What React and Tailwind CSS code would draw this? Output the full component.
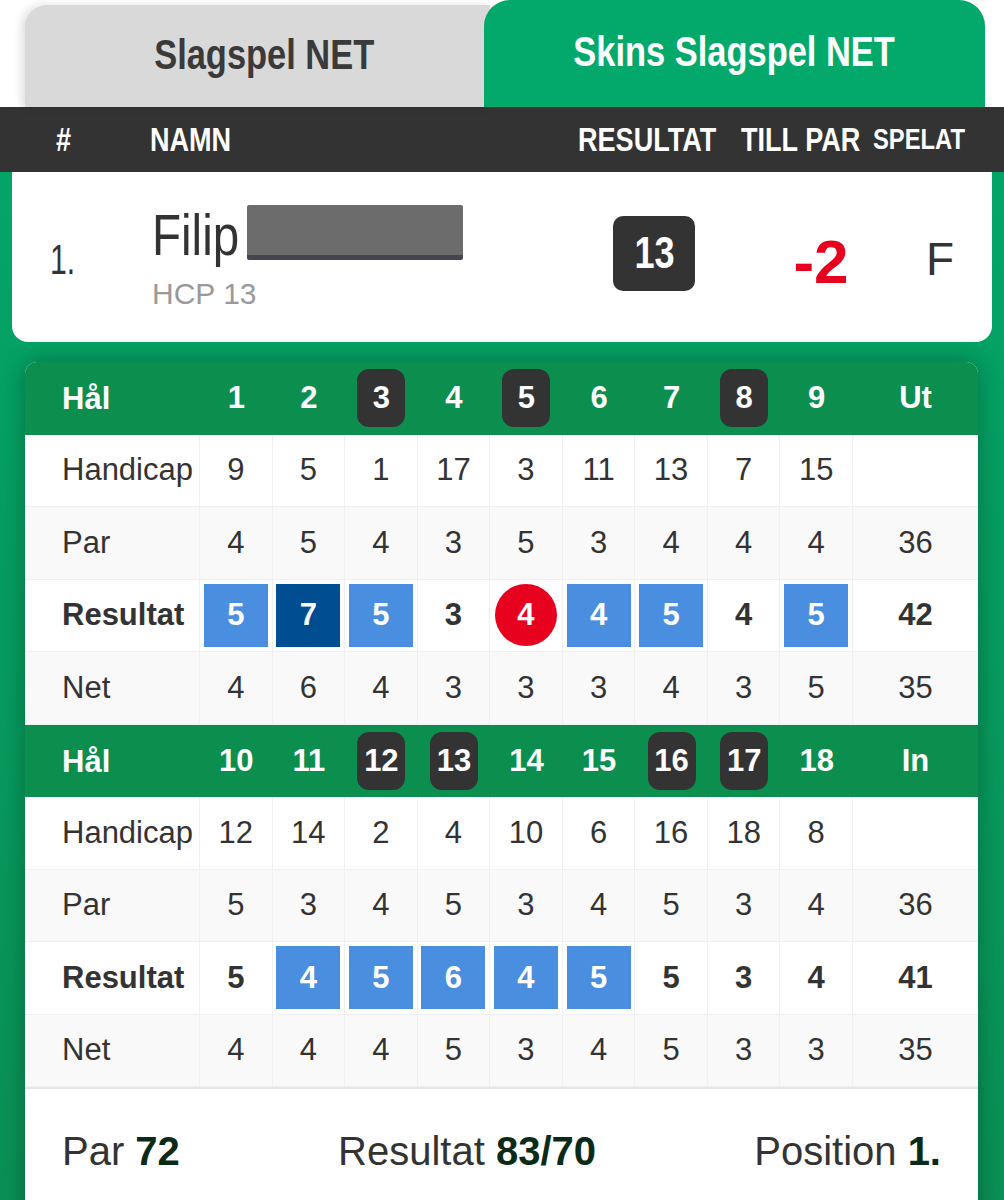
const narrow = "inline-block whitespace-nowrap scale-x-[0.82]";

const FRONT = {
  label: "Ut",
  holes: [1, 2, 3, 4, 5, 6, 7, 8, 9],
  marked: [3, 5, 8],
  hcp: [9, 5, 1, 17, 3, 11, 13, 7, 15],
  par: [4, 5, 4, 3, 5, 3, 4, 4, 4],
  res: [5, 7, 5, 3, 4, 4, 5, 4, 5],
  net: [4, 6, 4, 3, 3, 3, 4, 3, 5],
  totals: { par: 36, res: 42, net: 35 },
};

const BACK = {
  label: "In",
  holes: [10, 11, 12, 13, 14, 15, 16, 17, 18],
  marked: [12, 13, 16, 17],
  hcp: [12, 14, 2, 4, 10, 6, 16, 18, 8],
  par: [5, 3, 4, 5, 3, 4, 5, 3, 4],
  res: [5, 4, 5, 6, 4, 5, 5, 3, 4],
  net: [4, 4, 4, 5, 3, 4, 5, 3, 3],
  totals: { par: 36, res: 41, net: 35 },
};

const grid = "grid grid-cols-[175px_repeat(9,minmax(0,1fr))_125px]";

function ScoreCell({ score, par }) {
  const diff = score - par;
  if (diff < 0) {
    return (
      <div className="w-[62px] h-[62px] rounded-full bg-[#e8001f] text-white font-bold flex items-center justify-center">
        {score}
      </div>
    );
  }
  if (diff === 0) {
    return <span className="font-bold">{score}</span>;
  }
  return (
    <div
      className={
        diff === 1
          ? "w-[64px] h-[63px] bg-[#4a8ee0] text-white font-bold flex items-center justify-center"
          : "w-[64px] h-[63px] bg-[#004d91] text-white font-bold flex items-center justify-center"
      }
    >
      {score}
    </div>
  );
}

function DataRow({ label, values, total, bg, bold, par }) {
  return (
    <div className={`${grid} h-[72.5px] ${bg} border-b border-[#f0f0f0]`}>
      <div
        className={`pl-[37px] flex items-center border-r border-[#f0f0f0] ${
          bold ? "font-bold" : ""
        }`}
      >
        {label}
      </div>
      {values.map((v, i) => (
        <div
          key={i}
          className="flex items-center justify-center border-r border-[#f0f0f0]"
        >
          {par ? <ScoreCell score={v} par={par[i]} /> : v}
        </div>
      ))}
      <div className={`flex items-center justify-center ${bold ? "font-bold" : ""}`}>
        {total}
      </div>
    </div>
  );
}

function Nine({ data }) {
  return (
    <div>
      <div className={`${grid} h-[72.5px] bg-[#0c8e4f] text-white font-bold`}>
        <div className="pl-[37px] flex items-center pt-[2px]">Hål</div>
        {data.holes.map((h) => (
          <div key={h} className="flex items-center justify-center">
            {data.marked.includes(h) ? (
              <span className="h-[58px] min-w-[48px] px-[3px] rounded-[12px] bg-[#333333] flex items-center justify-center">
                {h}
              </span>
            ) : (
              h
            )}
          </div>
        ))}
        <div className="flex items-center justify-center">{data.label}</div>
      </div>
      <DataRow label="Handicap" values={data.hcp} total="" bg="bg-white" />
      <DataRow label="Par" values={data.par} total={data.totals.par} bg="bg-[#f9f9fa]" />
      <DataRow
        label="Resultat"
        values={data.res}
        par={data.par}
        total={data.totals.res}
        bg="bg-white"
        bold
      />
      <DataRow label="Net" values={data.net} total={data.totals.net} bg="bg-[#f9f9fa]" />
    </div>
  );
}

export default function App() {
  return (
    <div className="w-[1004px] h-[1200px] overflow-hidden bg-white font-['Liberation_Sans',Arial,sans-serif]">
      {/* tabs */}
      <div className="flex items-end h-[107px] pl-[25px]">
        <div className="w-[465px] -mr-[6px] h-[102px] rounded-tl-[22px] bg-[#d9d9d9] shadow-[-4px_0_8px_rgba(0,0,0,0.12)] flex items-center justify-center pl-[14px] pb-[4px] text-[42px] font-bold text-[#3a3a3a]">
          <span className={narrow}>Slagspel NET</span>
        </div>
        <div className="w-[501px] h-[107px] rounded-t-[26px] bg-[#03a96b] flex items-center justify-center pb-[4px] text-[42px] font-bold text-white">
          <span className={narrow}>Skins Slagspel NET</span>
        </div>
      </div>

      {/* column header */}
      <div className="flex items-center h-[65px] bg-[#333333] text-white font-bold text-[33px]">
        <div className="w-[150px] pl-[56px]">
          <span className={`${narrow} origin-left`}>#</span>
        </div>
        <div className="flex-1">
          <span className={`${narrow} origin-left`}>NAMN</span>
        </div>
        <div className="w-[163px]">
          <span className={`${narrow} origin-left`}>RESULTAT</span>
        </div>
        <div className="w-[132px]">
          <span className={`${narrow} origin-left`}>TILL PAR</span>
        </div>
        <div className="w-[131px] text-[29px]">
          <span className={`${narrow} origin-left`}>SPELAT</span>
        </div>
      </div>

      <div className="bg-gradient-to-b from-[#03a567] to-[#0a8f54] pb-10">
        {/* player row */}
        <div className="px-[12px]">
          <div className="h-[170px] bg-white rounded-b-[16px] flex items-center pl-[38px] pr-[32px] text-[#333333]">
            <div className="w-[102px] text-[42px] pt-[4px]">
              <span className="inline-block scale-x-[0.72] origin-left">1.</span>
            </div>
            <div className="flex-1 flex flex-col">
              <div className="flex items-center h-[60px]">
                <div className="w-[95px]">
                  <span className={`${narrow} origin-left text-[58px] leading-none`}>Filip</span>
                </div>
                <div className="w-[216px] h-[55px] -mt-[6px] rounded-[2px] bg-[#6c6c6c] border-b-[5px] border-[#45454f]" />
              </div>
              <div className="text-[30px] text-[#9a9a9a] leading-none mt-[14px]">HCP 13</div>
            </div>
            <div className="w-[82px] h-[75px] -mt-[8px] rounded-[10px] bg-[#333333] text-white font-bold text-[44px] flex items-center justify-center">
              <span className={narrow}>13</span>
            </div>
            <div className="ml-[85px] w-[82px] text-center text-[62px] font-bold text-[#e8001f] pt-[8px]">
              -2
            </div>
            <div className="ml-[58px] w-[40px] text-center text-[46px] pt-[4px]">F</div>
          </div>
        </div>

        {/* scorecard */}
        <div className="mx-[25px] mt-[20px] mr-[26px] rounded-t-[12px] overflow-hidden bg-white shadow-[0_0_24px_rgba(0,0,0,0.3)] text-[31px] text-[#333333]">
          <Nine data={FRONT} />
          <Nine data={BACK} />
          <div className="h-[140px] border-t-2 border-[#e6e6e6] flex justify-between items-start pt-[32px] px-[37px] text-[40px]">
            <div>
              Par <span className="font-bold text-[#0b2a17]">72</span>
            </div>
            <div>
              Resultat <span className="font-bold text-[#0b2a17]">83/70</span>
            </div>
            <div>
              Position <span className="font-bold text-[#0b2a17]">1.</span>
            </div>
          </div>
        </div>
      </div>
    </div>
  );
}
